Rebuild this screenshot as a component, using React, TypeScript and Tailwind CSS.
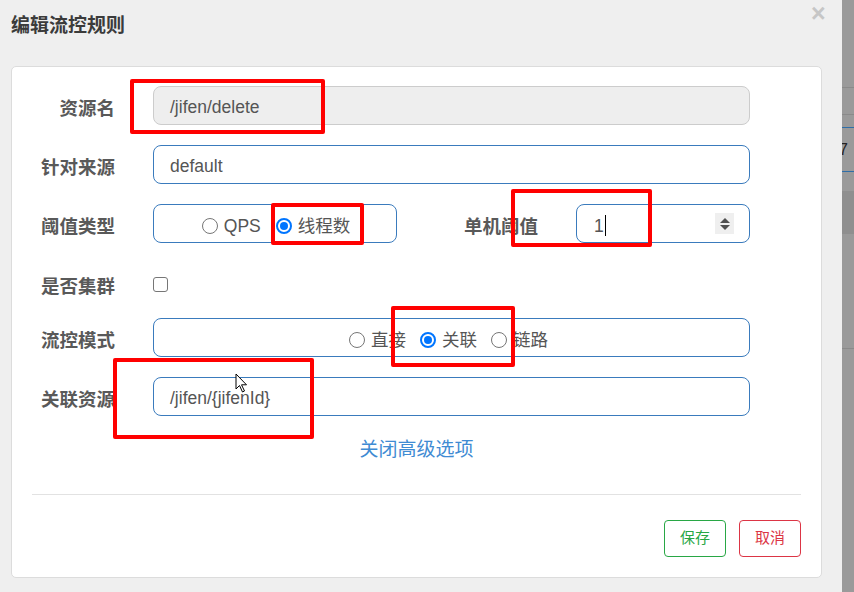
import React from "react";

const cjk = { fontFamily: '"Liberation Sans", "Noto Sans CJK SC", sans-serif' };

function Radio({ checked, label }: { checked?: boolean; label: string }) {
  return (
    <span className="inline-flex items-center gap-[6px]">
      {checked ? (
        <span className="flex size-[16px] shrink-0 items-center justify-center rounded-full border-2 border-[#0075ff] bg-white">
          <span className="size-[8px] rounded-full bg-[#0075ff]" />
        </span>
      ) : (
        <span className="size-[16px] shrink-0 rounded-full border border-[#767676] bg-white" />
      )}
      <span className="text-[17.5px] leading-[24px] text-[#555]">{label}</span>
    </span>
  );
}

function Label({ children, width = "w-[103px]" }: { children: React.ReactNode; width?: string }) {
  return (
    <div className={`${width} mt-[6px] shrink-0 text-right text-[18.5px] font-bold leading-[26px] text-[#595959]`}>
      {children}
    </div>
  );
}

const field =
  "flex h-[39px] items-center rounded-[8px] border px-[16px] pt-[4px] text-[17.5px] text-[#555]";
const blueField = `${field} border-[#3a7bbd] bg-white`;

// red annotation boxes drawn over the screenshot
const marks = [
  "left-[130px] top-[79px] w-[195px] h-[55px]",
  "left-[271px] top-[203px] w-[93px] h-[42px]",
  "left-[511px] top-[189px] w-[141px] h-[58px]",
  "left-[391px] top-[306px] w-[124px] h-[61px]",
  "left-[113px] top-[358px] w-[201px] h-[81px]",
];

export default function App() {
  return (
    <div className="flex h-[592px] w-[854px] overflow-hidden" style={cjk}>
      <div className="relative w-[842px] shrink-0 bg-[#efefef]">
        <div className="h-[66px] px-[11px] pt-[13px]">
          <h1 className="text-[19px] font-bold leading-[26px] text-[#3b3b3b]">编辑流控规则</h1>
        </div>
        <span className="absolute left-[811px] top-[0px] text-[25px] font-bold leading-[26px] text-[#c6c6c6]">×</span>

        <div className="ml-[11px] w-[811px] rounded-[5px] border border-[#dcdcdc] bg-white">
          <div className="flex flex-col gap-[20px] pr-[71px] pt-[19px]">
            <div className="flex items-center">
              <Label>资源名</Label>
              <div className={`${field} ml-[38px] flex-1 border-[#cccccc] bg-[#eeeeee]`}>/jifen/delete</div>
            </div>
            <div className="flex items-center">
              <Label>针对来源</Label>
              <div className={`${blueField} ml-[38px] flex-1`}>default</div>
            </div>
            <div className="flex items-center">
              <Label>阈值类型</Label>
              <div className={`${blueField} ml-[38px] w-[244px] justify-center gap-[15px] pl-[18px]`}>
                <Radio label="QPS" />
                <Radio checked label="线程数" />
              </div>
              <Label width="w-[141px]">单机阈值</Label>
              <div className={`${blueField} ml-[38px] flex-1 pl-[17px] pr-[15px]`}>
                <span className="leading-[24px]">1</span>
                <span className="ml-[1px] h-[21px] w-px bg-black" />
                <span className="ml-auto flex h-[21px] w-[19px] -translate-y-[2px] flex-col items-center justify-center gap-[2px] bg-[#efefef]">
                  <svg width="10" height="5" viewBox="0 0 10 5">
                    <path d="M0 5 L5 0 L10 5 Z" fill="#505050" />
                  </svg>
                  <svg width="10" height="5" viewBox="0 0 10 5">
                    <path d="M0 0 L10 0 L5 5 Z" fill="#505050" />
                  </svg>
                </span>
              </div>
            </div>
            <div className="flex h-[35px] items-center pt-[7px]">
              <Label>是否集群</Label>
              <span className="ml-[38px] size-[15px] shrink-0 rounded-[3px] border border-[#767676] bg-white" />
            </div>
            <div className="flex items-center">
              <Label>流控模式</Label>
              <div className={`${blueField} ml-[38px] flex-1 justify-center gap-[14px] pl-[10px]`}>
                <Radio label="直接" />
                <Radio checked label="关联" />
                <Radio label="链路" />
              </div>
            </div>
            <div className="flex items-center">
              <Label>关联资源</Label>
              <div className={`${blueField} ml-[38px] flex-1`}>/jifen/{"{jifenId}"}</div>
            </div>
          </div>

          <div className="mt-[20px] text-center text-[19px] leading-[27px] text-[#3f8bd3]">关闭高级选项</div>

          <div className="mx-[20px] mt-[31px] h-px bg-[#e2e2e2]" />

          <div className="flex justify-end gap-[13px] px-[20px] pb-[20px] pt-[25px]">
            <button className="h-[37px] w-[62px] rounded-[4px] border border-[#28a745] bg-white text-[15px] text-[#28a745]">
              保存
            </button>
            <button className="h-[37px] w-[62px] rounded-[4px] border border-[#dc3545] bg-white text-[15px] text-[#dc3545]">
              取消
            </button>
          </div>
        </div>

        {marks.map((m) => (
          <div key={m} className={`pointer-events-none absolute rounded-[2px] border-[4px] border-[#ff0000] ${m}`} />
        ))}

        <svg className="absolute left-[235px] top-[373px]" width="14" height="21" viewBox="0 0 14 21">
          <path d="M1 1 L1 16 L4.5 12.5 L7.5 19 L9.5 18 L6.5 11.8 L11.5 11.8 Z" fill="white" stroke="black" strokeWidth="1" />
        </svg>
      </div>

      <div className="flex w-[12px] flex-col bg-[#9a9a9a]">
        <div className="mt-[87px] h-px bg-[#8a8a8a]" />
        <div className="mt-[26px] h-px bg-[#8a8a8a]" />
        <div className="mt-[12px] h-px bg-[#2f6ea8]" />
        <div className="-ml-[3px] h-[43px] text-[16px] leading-[43px] text-[#222]">7</div>
        <div className="h-px bg-[#2f6ea8]" />
        <div className="mt-[19px] h-[43px] bg-[#8f8f8f]" />
        <div className="mt-[114px] h-px bg-[#8a8a8a]" />
      </div>
    </div>
  );
}
